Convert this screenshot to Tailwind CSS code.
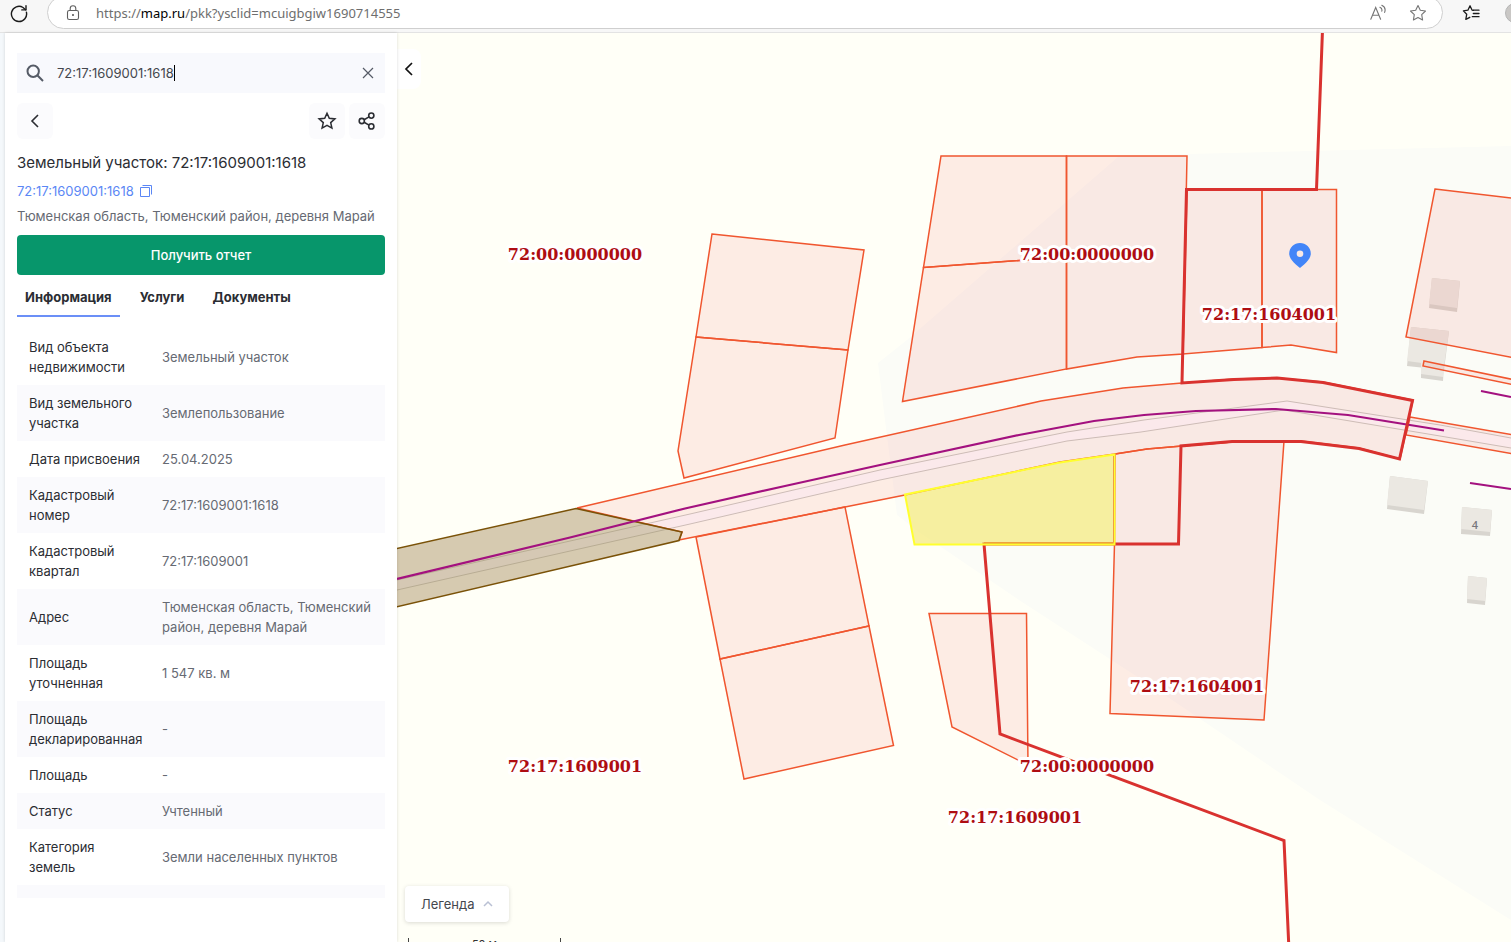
<!DOCTYPE html>
<html lang="ru">
<head>
    <meta charset="UTF-8">
    <meta name="viewport" content="width=device-width, initial-scale=1.0">
    <title>Земельный участок: 72:17:1609001:1618</title>
    <script src="https://cdn.jsdelivr.net/npm/@tailwindcss/browser@4"></script>
</head>
<body class="flex h-screen flex-col overflow-hidden bg-[#f4f8fb] font-['Inter',sans-serif] text-[13px] leading-5 text-[#2b2d33]">
    <!-- Browser bar -->
    <header class="flex h-[33px] shrink-0 items-start overflow-hidden border-b border-[#e3e3e3] bg-[#f7f7f7] pl-2">
        <button type="button" aria-label="Обновить" class="flex h-[26px] w-[20px] items-center justify-center">
            <svg class="h-5 w-5" viewBox="0 0 20 20" fill="none" stroke="#1b1b1b" stroke-width="1.4" stroke-linecap="round" stroke-linejoin="round">
                <path d="M18.400 9.200A7.600 7.600 0 1 1 15 4.500l2.600 2.200"/>
                <path d="M18 2.800v4.100h-4.200"/>
            </svg>
        </button>
        <div class="-mt-1 ml-[19px] flex h-[33px] flex-1 items-center rounded-full border border-[#cfcfcf] bg-white pr-3 pl-[17px]">
            <svg class="h-4 w-4" viewBox="0 0 16 16" fill="none" stroke="#5f5f5f" stroke-width="1.1">
                <rect x="2.5" y="5.5" width="11" height="9" rx="1.8"/>
                <path d="M5.2 5.3V3.6a2.8 2.8 0 0 1 5.6 0v1.7"/>
                <circle cx="8" cy="10" r=".5" fill="#5f5f5f"/>
            </svg>
            <a href="#" class="ml-[15px] flex-1 font-['Noto_Sans',sans-serif] text-[13px] text-[#6e6e6e]">https://<span class="text-black">map.ru</span>/pkk?ysclid=mcuigbgiw1690714555</a>
            <button type="button" aria-label="Прочесть вслух" class="mr-[22px]">
                <svg class="h-[18px] w-[18px]" viewBox="0 0 18 18" fill="none" stroke="#757575" stroke-width="1.1" stroke-linecap="round">
                    <path d="M1.8 15.3 6.7 3.5l4.9 11.8M3.5 11.3H10"/>
                    <path d="M10.9 3.2a3.4 3.4 0 0 1 1.9 4M12.8 1.2c2.800 1.300 3.900 4.200 2.800 7.200"/>
                </svg>
            </button>
            <button type="button" aria-label="В избранное" class="mr-[3px]">
                <svg class="h-[18px] w-[18px]" viewBox="0 0 18 18" fill="none" stroke="#757575" stroke-width="1.1" stroke-linejoin="round">
                    <path d="m9 1.5 2.3 4.8 5.2.7-3.8 3.7.9 5.3L9 13.5 4.4 16l.9-5.3L1.500 7l5.200-.7z"/>
                </svg>
            </button>
        </div>
        <button type="button" aria-label="Избранное" class="ml-[19px] flex h-[26px] w-[18px] items-center">
            <svg class="h-[18px] w-[18px]" viewBox="0 0 18 18" fill="none" stroke="#1b1b1b" stroke-width="1.3" stroke-linecap="round" stroke-linejoin="round">
                <path d="M11.3 6.3 10 6.1 8 1.800 5.900 6.200l-4.500.7 3.300 3.400-.9 5.100 4-2.100"/>
                <path d="M11.3 6.2H17M11.3 9.5H17M10.3 12.7H17"/>
            </svg>
        </button>
        <div class="mt-[3px] ml-[25px] h-5 w-1.5 overflow-hidden">
            <div class="h-5 w-5 rounded-full border border-[#b5b5b5] bg-[#c9c7c5]"></div>
        </div>
    </header>

    <main class="flex min-h-0 flex-1">
        <!-- Side panel -->
        <aside class="z-10 ml-[5px] flex w-[392px] shrink-0 flex-col bg-white px-3 pt-5 shadow-[0_0_3px_rgba(0,0,0,0.15)]">
            <div class="flex h-10 shrink-0 items-center bg-[#f8f9fd] pr-[11px] pl-[9px]">
                <label for="search" aria-label="Поиск">
                    <svg class="h-[18px] w-[18px]" viewBox="0 0 18 18" fill="none" stroke="#555b66" stroke-width="2">
                        <circle cx="7.2" cy="7.2" r="5.7"/>
                        <path d="m11.3 11.3 5.7 5.7"/>
                    </svg>
                </label>
                <div class="ml-[13px] flex flex-1 items-center">
                    <input id="search" type="text" value="72:17:1609001:1618" class="field-sizing-content bg-transparent text-[13px] text-[#44474e] outline-none">
                    <span class="h-4 w-px bg-black"></span>
                </div>
                <button type="button" aria-label="Очистить">
                    <svg class="h-3 w-3" viewBox="0 0 12 12" fill="none" stroke="#555b66" stroke-width="1.2"><path d="m1 1 10 10M11 1 1 11"/></svg>
                </button>
            </div>

            <div class="mt-2.5 flex gap-1">
                <button type="button" aria-label="Назад" class="mr-auto flex h-9 w-9 items-center justify-center rounded-md bg-[#fbfbfd]">
                    <svg class="h-4 w-4" viewBox="0 0 16 16" fill="none" stroke="#2b2d33" stroke-width="1.6"><path d="M11 2 5 8l6 6"/></svg>
                </button>
                <button type="button" aria-label="Добавить в избранное" class="flex h-9 w-9 items-center justify-center rounded-md bg-[#fbfbfd]">
                    <svg class="h-5 w-5" viewBox="0 0 20 20" fill="none" stroke="#2b2d33" stroke-width="1.5">
                        <path d="m10 2.200 2.300 5.100 5.600.6-4.200 3.700 1.200 5.500-4.900-2.800-4.900 2.800 1.200-5.500L2.100 7.900l5.600-.6z"/>
                    </svg>
                </button>
                <button type="button" aria-label="Поделиться" class="flex h-9 w-9 items-center justify-center rounded-md bg-[#fbfbfd]">
                    <svg class="h-5 w-5" viewBox="0 0 20 20" fill="none" stroke="#2b2d33" stroke-width="1.6">
                        <circle cx="4.8" cy="10" r="2.6"/>
                        <circle cx="14.3" cy="4.6" r="2.6"/>
                        <circle cx="14.3" cy="15.4" r="2.6"/>
                        <path d="m7.1 8.7 4.9-2.8M7.1 11.3l4.9 2.8"/>
                    </svg>
                </button>
            </div>

            <h1 class="mt-3 text-[15px] leading-6">Земельный участок: 72:17:1609001:1618</h1>
            <div class="mt-1.5 flex items-center gap-1.5 text-[#5b87f5]">
                <a href="#">72:17:1609001:1618</a>
                <button type="button" aria-label="Скопировать">
                    <svg class="h-3 w-3" viewBox="0 0 12 12" fill="none" stroke="currentColor"><path d="M.5 2.5h9v9h-9zM2.5.5h9v9"/></svg>
                </button>
            </div>
            <p class="mt-[5px] whitespace-nowrap text-[#666a73]">Тюменская область, Тюменский район, деревня Марай</p>
            <button type="button" class="mt-[9px] h-10 shrink-0 rounded bg-[#07966b] font-medium text-white">Получить отчет</button>

            <nav class="mt-0.5 flex shrink-0 gap-3 font-bold">
                <a href="#" class="h-10 border-b-2 border-[#6b8ff7] px-2 pt-2.5">Информация</a>
                <a href="#" class="h-10 px-2 pt-2.5">Услуги</a>
                <a href="#" class="h-10 px-2 pt-2.5">Документы</a>
            </nav>

            <div class="mt-3 mb-11 min-h-0 flex-1 overflow-hidden">
                <table class="w-full text-left">
                    <tbody>
                        <tr>
                            <th scope="row" class="w-[133px] py-2 pl-3 font-normal">Вид объекта недвижимости</th>
                            <td class="px-3 py-2 text-[#666a73]">Земельный участок</td>
                        </tr>
                        <tr class="bg-[#fafafd]">
                            <th scope="row" class="py-2 pl-3 font-normal">Вид земельного участка</th>
                            <td class="px-3 py-2 text-[#666a73]">Землепользование</td>
                        </tr>
                        <tr>
                            <th scope="row" class="py-2 pl-3 font-normal">Дата присвоения</th>
                            <td class="px-3 py-2 text-[#666a73]">25.04.2025</td>
                        </tr>
                        <tr class="bg-[#fafafd]">
                            <th scope="row" class="py-2 pl-3 font-normal">Кадастровый<br>номер</th>
                            <td class="px-3 py-2 text-[#666a73]">72:17:1609001:1618</td>
                        </tr>
                        <tr>
                            <th scope="row" class="py-2 pl-3 font-normal">Кадастровый квартал</th>
                            <td class="px-3 py-2 text-[#666a73]">72:17:1609001</td>
                        </tr>
                        <tr class="bg-[#fafafd]">
                            <th scope="row" class="py-2 pl-3 font-normal">Адрес</th>
                            <td class="px-3 py-2 text-[#666a73]">Тюменская область, Тюменский район, деревня Марай</td>
                        </tr>
                        <tr>
                            <th scope="row" class="py-2 pl-3 font-normal">Площадь уточненная</th>
                            <td class="px-3 py-2 text-[#666a73]">1 547 кв. м</td>
                        </tr>
                        <tr class="bg-[#fafafd]">
                            <th scope="row" class="py-2 pl-3 font-normal">Площадь декларированная</th>
                            <td class="px-3 py-2 text-[#666a73]">-</td>
                        </tr>
                        <tr>
                            <th scope="row" class="py-2 pl-3 font-normal">Площадь</th>
                            <td class="px-3 py-2 text-[#666a73]">-</td>
                        </tr>
                        <tr class="bg-[#fafafd]">
                            <th scope="row" class="py-2 pl-3 font-normal">Статус</th>
                            <td class="px-3 py-2 text-[#666a73]">Учтенный</td>
                        </tr>
                        <tr>
                            <th scope="row" class="py-2 pl-3 font-normal">Категория<br>земель</th>
                            <td class="px-3 py-2 text-[#666a73]">Земли населенных пунктов</td>
                        </tr>
                        <tr class="bg-[#fafafd]">
                            <td colspan="2" class="h-14"></td>
                        </tr>
                    </tbody>
                </table>
            </div>
        </aside>

        <!-- Map -->
        <section class="relative min-w-0 flex-1 overflow-hidden bg-[#fffff7]">
            <svg class="h-full w-full" viewBox="397 33 1114 909" preserveAspectRatio="xMinYMin slice">
                <path fill="#fbfcf7" d="M878 363 907 340 1118 157 1188 154 1511 146V920L1320 800 1150 685 1019 600 919 532 897 515 885 420z"/>

                <!-- Road surface -->
                <path fill="#fdfcff" d="M397 580 690 514 880 470 1067 432 1144 420 1287 401 1440 425 1511 438V448L1440 436 1284 410 1141 432 1067 441 880 480 690 524 397 590z"/>
                <path fill="none" stroke="#c9c9c4" d="M397 580 690 514 880 470 1067 432 1144 420 1287 401 1440 425 1511 438M1511 448 1440 436 1284 410 1141 432 1067 441 880 480 690 524 397 590"/>

                <!-- Buildings -->
                <g fill="#d8d5cf">
                    <path d="M1432 278l28 3-3 31-28-4z"/>
                    <path d="M1421 360l23 3-1 18-22-3z"/>
                    <path d="M1411 327l38 4-5 39-37-4z"/>
                    <path d="M1390 476l38 5-4 33-37-5z"/>
                    <path d="M1462 507l30 3-2 26-29-2z"/>
                    <path d="M1468 576l19 2-2 27-18-2z"/>
                </g>
                <g fill="#ebe8e2">
                    <path d="M1432 278l28 3-3 27-28-4z"/>
                    <path d="M1421 360l23 3-1 14-22-3z"/>
                    <path d="M1411 327l38 4-5 35-37-5z"/>
                    <path d="M1390 476l38 5-4 29-37-5z"/>
                    <path d="M1462 507l30 3-2 22-29-3z"/>
                    <path d="M1468 576l19 2-2 23-18-2z"/>
                </g>
                <text x="1475" y="529" text-anchor="middle" class="fill-[#77777b] font-['Open_Sans',sans-serif] text-[11px] font-semibold">4</text>

                <!-- Parcels -->
                <g fill="#f2645c" fill-opacity=".12" stroke="#f0562f" stroke-width="1.5">
                    <path d="M712 234 864 250 848 350 696 337z"/>
                    <path d="M696 337 848 350 835 438 684 478 678 451z"/>
                    <path d="M941 156H1066.500V257L923.500 267.500z"/>
                    <path d="M923.500 267.500 1066.500 257V369L902.500 401.500z"/>
                    <path d="M1066.500 156H1187L1183 354 1137 357 1066.500 369z"/>
                    <path d="M1187 189.500H1262V347.500L1183 354z"/>
                    <path d="M1262 189.500H1336.500V352.500L1291 345 1262 347.500z"/>
                    <path d="M577 508 845 445 1041 401 1123 388 1182 383 1234 379 1277 378 1323 382 1413 400 1400 459 1359 448 1301 441 1232 442 1182 446 1147 449 1115 454 1060 462 905 495 845 507 679 540 682 532z"/>
                    <path d="M696 537 845 507 869 626 720 659z"/>
                    <path d="M720 659 869 626 893.500 745.500 744 779z"/>
                    <path d="M929 613.500H1026.500L1028 765 952 727z"/>
                    <path d="M1115 454 1147 449 1182 446 1232 442 1284 441 1264 720 1110 713.500 1114.500 544z"/>
                    <path d="M1435 189 1520 199V359L1406 337z"/>
                    <path d="M1424 361 1520 381V386L1423 366z"/>
                    <path d="M1410 417 1520 436V455L1406 435z"/>
                </g>

                <!-- Easement zone -->
                <path fill="#a48a58" fill-opacity=".45" stroke="#7a5208" stroke-width="1.5" d="M390 550 576 508.500 682 532 679 540.500 390 608.500z"/>

                <!-- Power lines -->
                <path fill="none" stroke="#a3117f" stroke-width="2.2" d="M397 579 570 537.500 685 508.500 785 486 880 465 1019 435 1094 421 1144 415 1196 411 1276 409 1348 415 1444 430.500M1481 391 1511 397M1470 483 1511 489"/>

                <!-- Quarter borders -->
                <path fill="none" stroke="#d9322f" stroke-width="3" d="M1322.500 30 1316.500 189.500H1186.500L1182 383 1234 379.500 1277 378 1323 382.500 1412.500 400.500 1399.500 459 1359 448.500 1301 441.500H1232L1181 446 1178.500 544H984L1000 734 1284 840.500 1289 950"/>

                <!-- Selected parcel -->
                <path fill="#f5f047" fill-opacity=".45" d="M905 494.500 1060 462.500 1114.500 454.500V544.500H914.500z"/>
                <path fill="#f0b060" fill-opacity=".1" stroke="#ffff2e" stroke-width="2" d="M905 494.500 1060 462.500 1114.500 454.500V544.500H914.500z"/>
                <path fill="none" stroke="#f0a040" d="M984 542.500H1113.500V456"/>

                <g text-anchor="middle" stroke="#fff" stroke-width="6" stroke-linejoin="round" class="fill-[#ae0d12] font-['DejaVu_Serif',serif] text-[16px] font-bold [paint-order:stroke]">
                    <text x="575" y="260">72:00:0000000</text>
                    <text x="1087" y="260">72:00:0000000</text>
                    <text x="1269" y="320">72:17:1604001</text>
                    <text x="1197" y="692">72:17:1604001</text>
                    <text x="575" y="772">72:17:1609001</text>
                    <text x="1087" y="772">72:00:0000000</text>
                    <text x="1015" y="823">72:17:1609001</text>
                </g>

                <!-- Pin -->
                <path fill="#4285f8" fill-rule="evenodd" d="M1300 268c-2.500-2.300-10.800-8.200-10.800-14.300a10.800 10.800 0 0 1 21.600 0c0 6.100-8.300 12-10.800 14.300zm0-17.600a3.300 3.300 0 1 0 0 6.600 3.300 3.300 0 0 0 0-6.600z"/>
            </svg>

            <button type="button" aria-label="Свернуть панель" class="absolute top-4 left-0 flex h-10 w-6 items-center justify-center rounded-r-lg bg-white">
                <svg class="h-4 w-4" viewBox="0 0 16 16" fill="none" stroke="#111" stroke-width="1.7"><path d="M11 2 5 8l6 6"/></svg>
            </button>

            <div class="absolute -bottom-4 left-2 flex flex-col items-start gap-4">
                <button type="button" class="flex h-9 items-center gap-2 rounded bg-white px-4 text-[#44474e] shadow-[0_1px_4px_rgba(0,0,0,0.15)]">
                    Легенда
                    <svg class="h-2.5 w-2.5" viewBox="0 0 10 10" fill="none" stroke="#b9c0d4" stroke-width="1.5"><path d="m1 7 4-4 4 4"/></svg>
                </button>
                <div class="ml-[3px] h-5 w-[153px] border border-t-0 border-[#444] text-center text-[11px] leading-3 text-[#333]">50 м</div>
            </div>
        </section>
    </main>
</body>
</html>
